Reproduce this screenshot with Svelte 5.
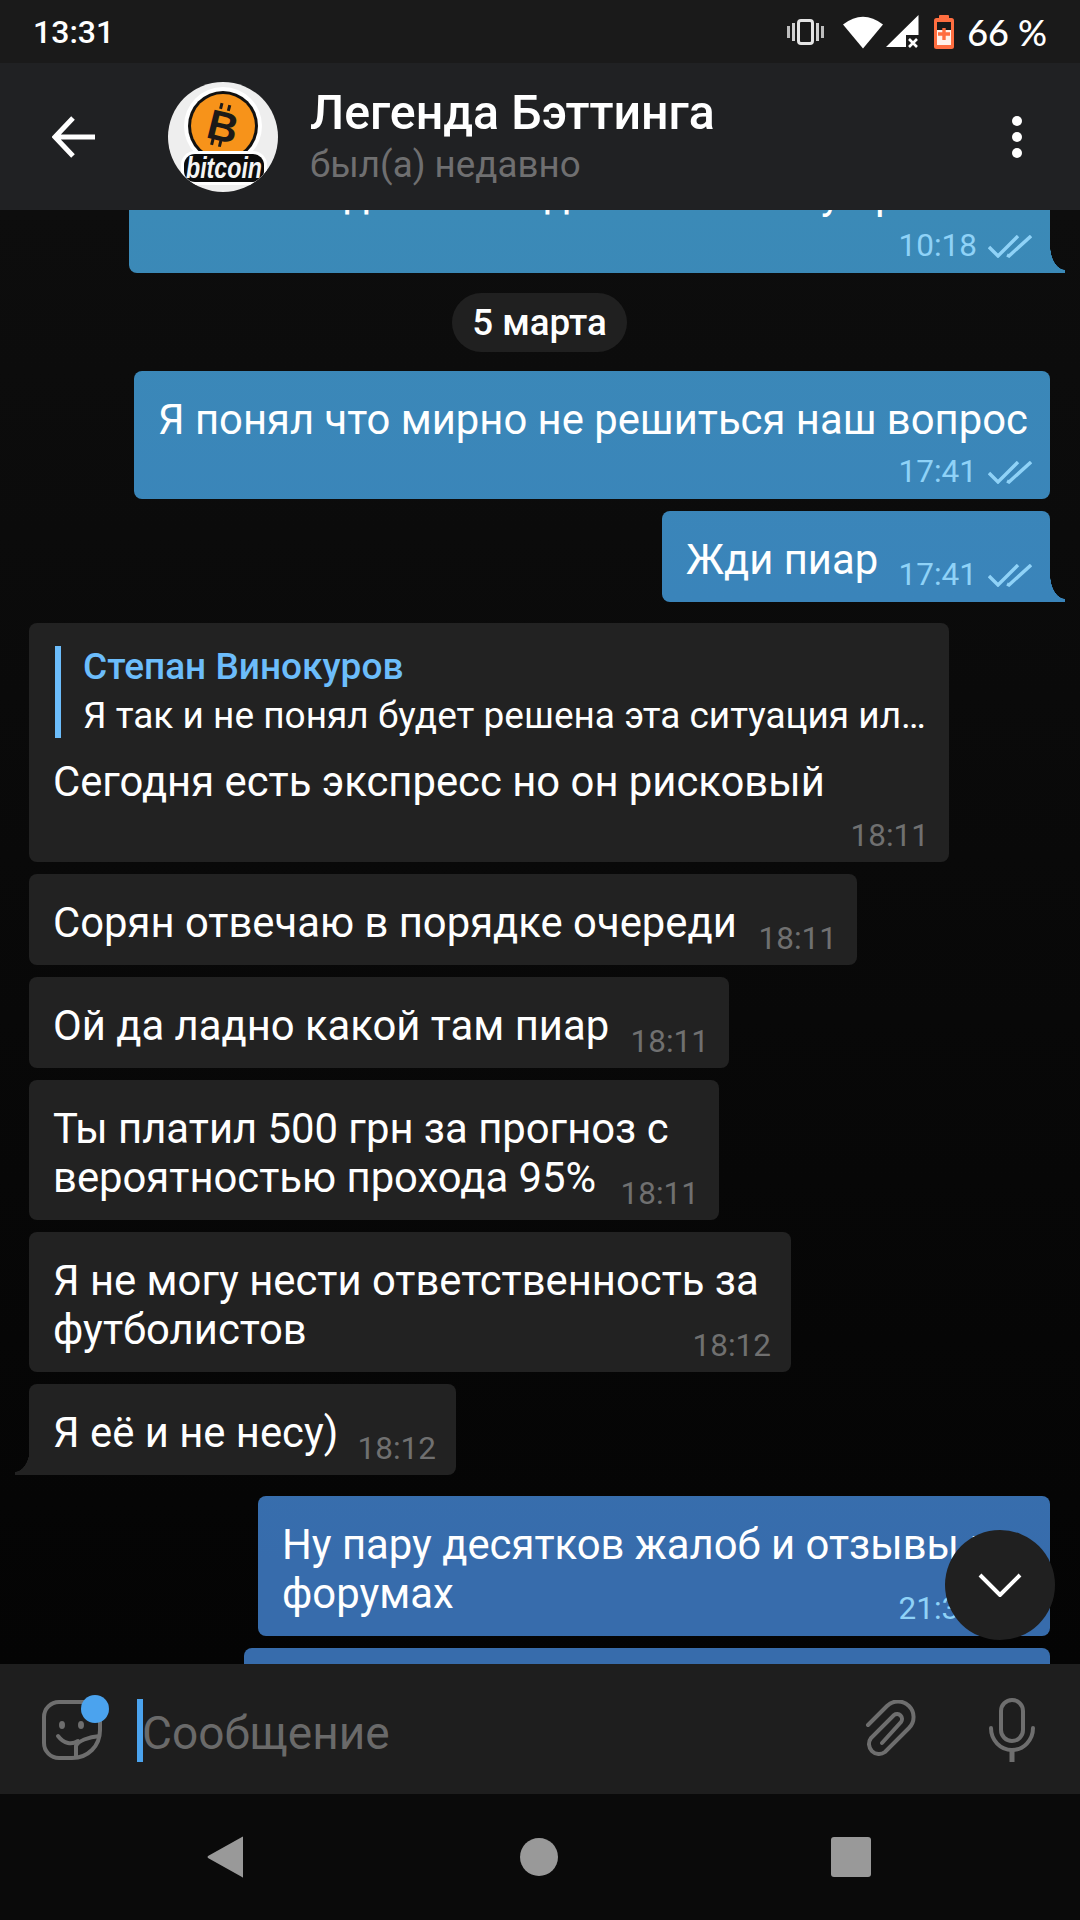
<script>
  const messages = [
    { id: 1, out: true, w: 921, pb: 55, mt: -65, text: 'Так всё и делаете а дальше я пишу время', time: '10:18', tail: true },
    { id: 'date', date: '5 марта' },
    { id: 2, out: true, w: 916, pb: 55, text: 'Я понял что мирно не решиться наш вопрос', time: '17:41' },
    { id: 3, out: true, w: 388, gap: 12, text: 'Жди пиар', time: '17:41', tail: true },
    {
      id: 4, w: 920, gap: 21, pb: 56, time: '18:11',
      reply: { name: 'Степан Винокуров', text: 'Я так и не понял будет решена эта ситуация ил…' },
      text: 'Сегодня есть экспресс но он рисковый'
    },
    { id: 5, w: 828, gap: 12, text: 'Сорян отвечаю в порядке очереди', time: '18:11' },
    { id: 6, w: 700, gap: 12, text: 'Ой да ладно какой там пиар', time: '18:11' },
    { id: 7, w: 690, gap: 12, text: 'Ты платил 500 грн за прогноз с вероятностью прохода 95%', time: '18:11' },
    { id: 8, w: 762, gap: 12, text: 'Я не могу нести ответственность за футболистов', time: '18:12' },
    { id: 9, w: 427, gap: 12, text: 'Я её и не несу)', time: '18:12', tail: true },
    { id: 10, out: true, w: 792, gap: 21, text: 'Ну пару десятков жалоб и отзывы на форумах', time: '21:32' },
    { id: 11, out: true, w: 806, gap: 12, text: '', empty: true }
  ];
</script>

<div class="screen">
  <div class="status-bar">
    <span class="clock">13:31</span>
    <div class="status-icons">
      <svg class="ic-vibrate" width="37" height="26" viewBox="0 0 37 26">
        <rect x="11.5" y="1.5" width="14" height="23" rx="2.5" fill="none" stroke="#e4e4e4" stroke-width="3" />
        <rect x="0" y="7" width="3" height="12" fill="#bdbdbd" />
        <rect x="5" y="4" width="3" height="18" fill="#d0d0d0" />
        <rect x="29" y="4" width="3" height="18" fill="#d0d0d0" />
        <rect x="34" y="7" width="3" height="12" fill="#bdbdbd" />
      </svg>
      <svg class="ic-wifi" width="40" height="34" viewBox="0 0 40 34">
        <path d="M0 9.5 Q20 -6 40 9.5 L20 33.5 Z" fill="#fff" />
      </svg>
      <svg class="ic-signal" width="33" height="33" viewBox="0 0 33 33">
        <path d="M0 32 L32.5 0 V20 H20 V32 Z" fill="#fff" />
        <path d="M23 24 L31 32 M31 24 L23 32" stroke="#fff" stroke-width="2.6" />
      </svg>
      <svg class="ic-battery" width="20" height="34" viewBox="0 0 20 34">
        <rect x="5" y="0" width="10" height="5" rx="1" fill="#ff6e40" />
        <rect x="0" y="3" width="20" height="31" rx="2.5" fill="#ff6e40" />
        <rect x="3" y="7" width="14" height="8" fill="#1a1a1a" />
        <rect x="3" y="15" width="14" height="15" fill="#fff1ea" />
        <path d="M10 13 V25 M4 19 H16" stroke="#ff6e40" stroke-width="3.4" />
      </svg>
      <span class="percent">66 %</span>
    </div>
  </div>

  <header class="chat-header">
    <svg class="back" width="43" height="42" viewBox="0 0 43 42">
      <path d="M21 2 L3 21 L21 40 M3 21 H43" fill="none" stroke="#fff" stroke-width="5" />
    </svg>
    <svg class="avatar" width="110" height="110" viewBox="0 0 110 110">
      <defs>
        <clipPath id="av"><circle cx="55" cy="55" r="55" /></clipPath>
      </defs>
      <g clip-path="url(#av)">
        <rect width="110" height="110" fill="#eeeeee" />
        <circle cx="55" cy="44" r="39" fill="#fff" />
        <circle cx="55" cy="44" r="35" fill="#111" />
        <circle cx="55" cy="44" r="32" fill="#f7931a" />
        <g transform="rotate(14 55 44)" fill="#1c1a18">
          <text x="55" y="59" text-anchor="middle" font-family="Liberation Sans, sans-serif" font-weight="700" font-size="42">B</text>
          <rect x="47" y="22" width="3" height="6" />
          <rect x="55" y="22" width="3" height="6" />
          <rect x="47" y="59" width="3" height="6" />
          <rect x="55" y="59" width="3" height="6" />
        </g>
        <rect x="13" y="69" width="86" height="34" rx="14" fill="#fff" />
        <rect x="16" y="72" width="80" height="28" rx="11" fill="#0c0c0c" />
        <text x="56" y="96" text-anchor="middle" textLength="76" lengthAdjust="spacingAndGlyphs" font-family="Liberation Sans, sans-serif" font-weight="700" font-style="italic" font-size="30" fill="#f4f4f4">bitcoin</text>
      </g>
    </svg>
    <div class="peer">
      <div class="peer-name">Легенда Бэттинга</div>
      <div class="peer-status">был(а) недавно</div>
    </div>
    <div class="menu"><span></span><span></span><span></span></div>
  </header>

  <main class="chat-body">
    {#each messages as m (m.id)}
      {#if m.date}
        <div class="date-pill">{m.date}</div>
      {:else}
        <div
          class="bubble"
          class:out={m.out}
          class:in={!m.out}
          class:tail={m.tail}
          style="width:{m.w}px; margin-top:{m.mt ?? m.gap ?? 0}px; padding-bottom:{m.pb ?? 18}px"
        >
          {#if m.reply}
            <div class="reply">
              <div class="reply-name">{m.reply.name}</div>
              <div class="reply-text">{m.reply.text}</div>
            </div>
          {/if}
          <div class="text" class:empty={m.empty}>{m.text}</div>
          {#if m.time}
            <div class="meta">
              <span>{m.time}</span>
              {#if m.out}
                <svg width="44" height="23" viewBox="0 0 44 23">
                  <path d="M1 12 L10 21 L30 1 M19 20 L21 21 L43 1" fill="none" stroke="#8fd2f7" stroke-width="3.4" />
                </svg>
              {/if}
            </div>
          {/if}
        </div>
      {/if}
    {/each}
  </main>

  <footer class="composer">
    <div class="sticker">
      <svg width="60" height="60" viewBox="0 0 60 60" fill="none" stroke="#6e6e6e" stroke-width="4">
        <path d="M17 2 H43 A15 15 0 0 1 58 17 V30 C58 46 46 58 30 58 H17 A15 15 0 0 1 2 43 V17 A15 15 0 0 1 17 2 Z" />
        <path d="M34 58 V46 C36 41 46 37 58 36" />
        <path d="M16 36 C22 44 30 45 36 41" stroke-linecap="round" />
        <ellipse cx="20" cy="25" rx="3" ry="4" fill="#6e6e6e" stroke="none" />
        <ellipse cx="39" cy="25" rx="3" ry="4" fill="#6e6e6e" stroke="none" />
      </svg>
      <span class="dot"></span>
    </div>
    <span class="cursor"></span>
    <span class="placeholder">Сообщение</span>
    <svg class="clip" width="53" height="60" viewBox="0 0 53 60" fill="none" stroke="#6e6e6e" stroke-width="4" stroke-linecap="round">
      <path d="M3 25 L22 6 A15.5 15.5 0 0 1 44 28 L20 52 A10 10 0 0 1 6 38 L29 15 A5 5 0 0 1 36 22 L17 43" />
    </svg>
    <svg class="mic" width="46" height="64" viewBox="0 0 46 64" fill="none" stroke="#6e6e6e" stroke-width="4">
      <rect x="12" y="2" width="22" height="41" rx="11" />
      <path d="M2 30 A21 22 0 0 0 44 30" stroke-linecap="round" />
      <path d="M23 52 V64" stroke-width="5" />
    </svg>
  </footer>

  <nav class="nav-bar">
    <svg width="37" height="42" viewBox="0 0 37 42"><path d="M36 1 V41 Q36 42 35 41 L1 22 Q0 21 1 20 L35 1 Q36 0 36 1 Z" fill="#999" /></svg>
    <span class="nav-home"></span>
    <span class="nav-recent"></span>
  </nav>

  <button class="scroll-down" aria-label="Вниз">
    <svg width="44" height="24" viewBox="0 0 44 24"><path d="M2 2 L22 22 L42 2" fill="none" stroke="#fff" stroke-width="4" /></svg>
  </button>
</div>

<style>
  :global(body) {
    background: #000;
  }

  .screen {
    position: relative;
    display: flex;
    flex-direction: column;
    width: 1080px;
    height: 1920px;
    overflow: hidden;
    font-family: Roboto, "Liberation Sans", sans-serif;
    color: #fff;
  }

  .status-bar {
    flex: 0 0 63px;
    display: flex;
    align-items: center;
    justify-content: space-between;
    padding: 0 33px;
    background: #1a1a1a;
  }

  .clock {
    font-size: 32px;
    font-weight: 500;
  }

  .status-icons {
    display: flex;
    align-items: center;
  }

  .ic-wifi { margin-left: 19px; }
  .ic-signal { margin-left: 3px; }
  .ic-battery { margin-left: 15px; }

  .percent {
    margin-left: 13px;
    font-family: Lato, Roboto, sans-serif;
    font-size: 36px;
    font-weight: 500;
  }

  .chat-header {
    flex: 0 0 147px;
    display: flex;
    align-items: center;
    padding: 0 58px 0 52px;
    background: #202123;
  }

  .back { margin-right: 73px; }
  .avatar { margin-right: 32px; }

  .peer {
    flex: 1;
  }

  .peer-name {
    font-size: 48.3px;
    font-weight: 500;
    line-height: 52px;
  }

  .peer-status {
    margin-top: 5px;
    font-size: 36.75px;
    line-height: 42px;
    color: #6f6f70;
  }

  .menu {
    display: flex;
    flex-direction: column;
    gap: 6px;
  }

  .menu span {
    width: 10px;
    height: 10px;
    border-radius: 50%;
    background: #fff;
  }

  .chat-body {
    flex: 1;
    display: flex;
    flex-direction: column;
    overflow: hidden;
    padding: 0 30px 0 29px;
    background: linear-gradient(#0d0d0d, #040404);
  }

  .date-pill {
    align-self: center;
    flex: none;
    margin: 20px 0 19px;
    padding: 0 20px;
    height: 59px;
    line-height: 59px;
    border-radius: 30px;
    background: #202020;
    font-size: 36.75px;
    font-weight: 500;
  }

  .bubble {
    position: relative;
    flex: none;
    box-sizing: border-box;
    padding: 24px 10px 18px 24px;
    border-radius: 8px;
    font-size: 41.8px;
    line-height: 49px;
  }

  .bubble.out {
    align-self: flex-end;
    background: linear-gradient(#3b8ab7 210px, #3a84ba 600px, #376cac 1560px) fixed;
  }

  .bubble.in {
    align-self: flex-start;
    background: #222;
  }

  .bubble.tail.out { border-bottom-right-radius: 0; }
  .bubble.tail.in { border-bottom-left-radius: 0; }

  .bubble.tail::after {
    content: '';
    position: absolute;
    bottom: 0;
    width: 15px;
    height: 28px;
    background: inherit;
  }

  .bubble.tail.out::after {
    right: -15px;
    -webkit-mask: radial-gradient(ellipse 15px 25px at 100% 0, transparent 98%, #000);
    mask: radial-gradient(ellipse 15px 25px at 100% 0, transparent 98%, #000);
  }

  .bubble.tail.in::after {
    left: -14px;
    -webkit-mask: radial-gradient(ellipse 15px 25px at 0 0, transparent 98%, #000);
    mask: radial-gradient(ellipse 15px 25px at 0 0, transparent 98%, #000);
  }

  .text.empty {
    height: 49px;
  }

  .reply {
    margin: -1px 0 19px 2px;
    padding-left: 22px;
    border-left: 6px solid #6cbdfb;
    height: 92px;
  }

  .reply-name {
    color: #6cbdfb;
    font-size: 37px;
    font-weight: 500;
    line-height: 42px;
  }

  .reply-text {
    font-size: 37px;
    line-height: 56px;
    white-space: nowrap;
  }

  .meta {
    position: absolute;
    right: 20px;
    bottom: 6px;
    display: flex;
    align-items: center;
    gap: 11px;
    font-size: 31.5px;
    line-height: 40px;
    color: #707070;
  }

  .bubble.out .meta {
    right: 18px;
    bottom: 7px;
    color: #8fd2f7;
  }

  .composer {
    flex: 0 0 130px;
    display: flex;
    align-items: center;
    box-sizing: border-box;
    padding: 2px 45px 0 42px;
    background: #1e1e1e;
  }

  .sticker {
    position: relative;
    width: 60px;
    height: 60px;
    margin-right: 35px;
  }

  .sticker svg { display: block; }

  .dot {
    position: absolute;
    top: -5px;
    right: -7px;
    width: 28px;
    height: 28px;
    border-radius: 50%;
    background: #4ba3ee;
  }

  .cursor {
    width: 6px;
    height: 63px;
    background: #4ba3ee;
  }

  .placeholder {
    flex: 1;
    margin: 6px 0 0 -1px;
    font-size: 46px;
    color: #6a6a6a;
  }

  .clip { margin-right: 71px; }

  .nav-bar {
    flex: 0 0 126px;
    display: flex;
    align-items: center;
    justify-content: space-between;
    padding: 0 209px 0 207px;
    background: #0a0a0a;
  }

  .nav-home {
    width: 38px;
    height: 38px;
    border-radius: 50%;
    background: #999;
    margin-left: 2px;
  }

  .nav-recent {
    width: 40px;
    height: 40px;
    border-radius: 3px;
    background: #999;
  }

  .scroll-down {
    position: absolute;
    left: 945px;
    top: 1530px;
    display: flex;
    align-items: center;
    justify-content: center;
    width: 110px;
    height: 110px;
    padding: 0;
    border: 0;
    border-radius: 50%;
    background: #202020;
  }
</style>
